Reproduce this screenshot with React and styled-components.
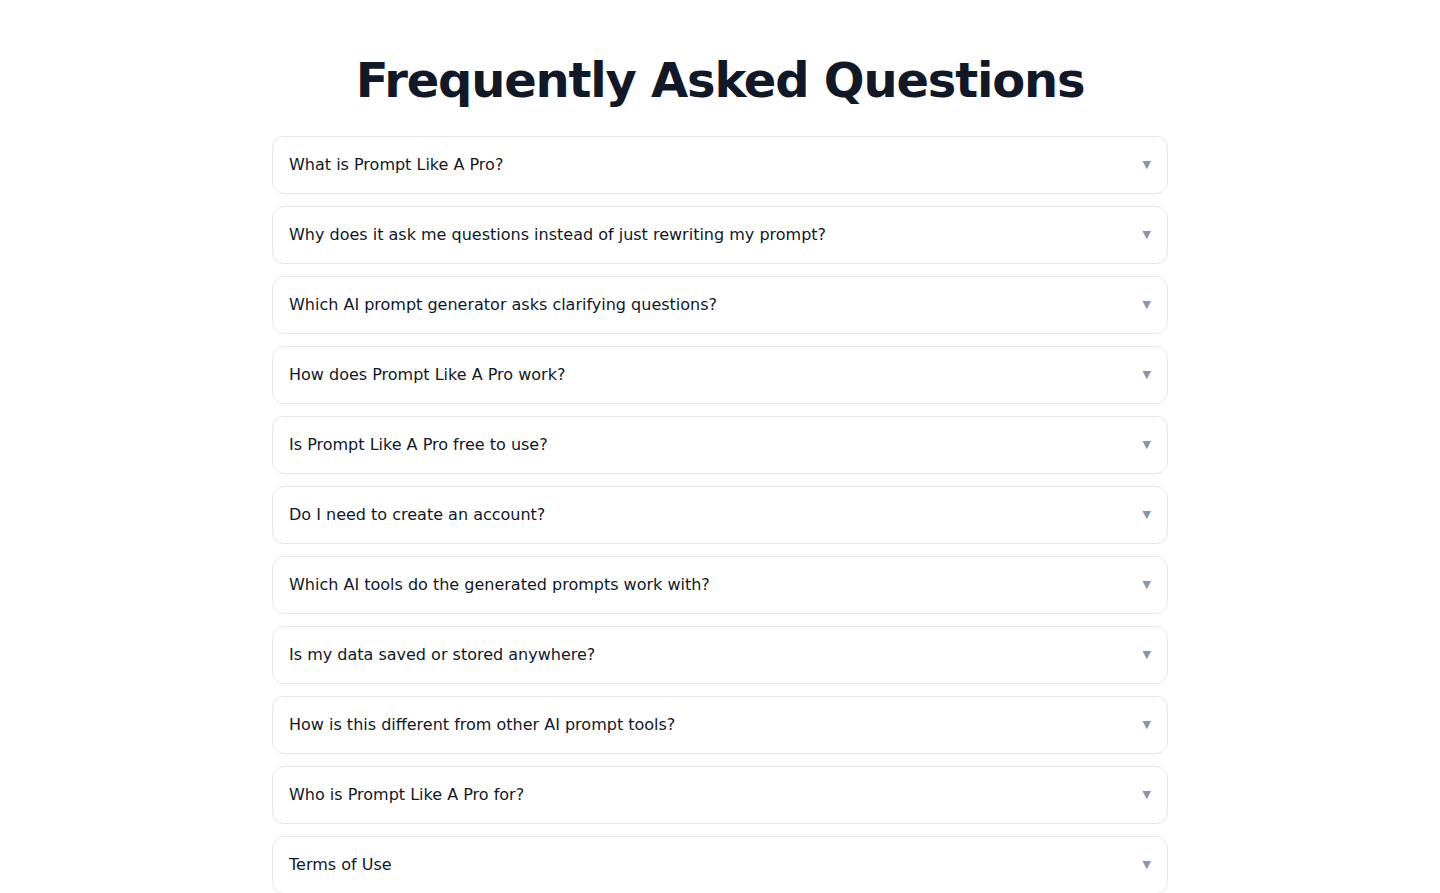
import React from 'react';
import styled, { createGlobalStyle } from 'styled-components';

const GlobalStyle = createGlobalStyle`
    body {
        margin: 0;
        background: #ffffff;
        font-family: "DejaVu Sans", Verdana, sans-serif;
        color: #111827;
    }
`;

const Page = styled.main`
    max-width: 896px;
    margin: 0 auto;
    padding: 50px 0 48px;
`;

const Title = styled.h1`
    margin: 0 0 26px;
    text-align: center;
    font-size: 48px;
    line-height: 1.25;
    font-weight: 700;
    letter-spacing: -0.025em;
    color: #111827;
`;

const List = styled.div`
    display: flex;
    flex-direction: column;
    gap: 12px;
`;

const Item = styled.details`
    border: 1px solid #e5e7eb;
    border-radius: 12px;
    background: #ffffff;
`;

const Question = styled.summary`
    display: flex;
    align-items: center;
    justify-content: space-between;
    padding: 16px;
    font-size: 16px;
    line-height: 24px;
    color: #111827;
    cursor: pointer;
    list-style: none;
    &::-webkit-details-marker {
        display: none;
    }
`;

const Arrow = styled.span`
    font-size: 11px;
    color: #8b95a8;
`;

const questions = [
    'What is Prompt Like A Pro?',
    'Why does it ask me questions instead of just rewriting my prompt?',
    'Which AI prompt generator asks clarifying questions?',
    'How does Prompt Like A Pro work?',
    'Is Prompt Like A Pro free to use?',
    'Do I need to create an account?',
    'Which AI tools do the generated prompts work with?',
    'Is my data saved or stored anywhere?',
    'How is this different from other AI prompt tools?',
    'Who is Prompt Like A Pro for?',
    'Terms of Use',
];

const App = () => {
    return (
        <>
            <GlobalStyle />
            <Page>
                <Title>Frequently Asked Questions</Title>
                <List>
                    {questions.map((q, index) => (
                        <Item key={index}>
                            <Question>
                                {q}
                                <Arrow>▼</Arrow>
                            </Question>
                        </Item>
                    ))}
                </List>
            </Page>
        </>
    );
};

export default App;
